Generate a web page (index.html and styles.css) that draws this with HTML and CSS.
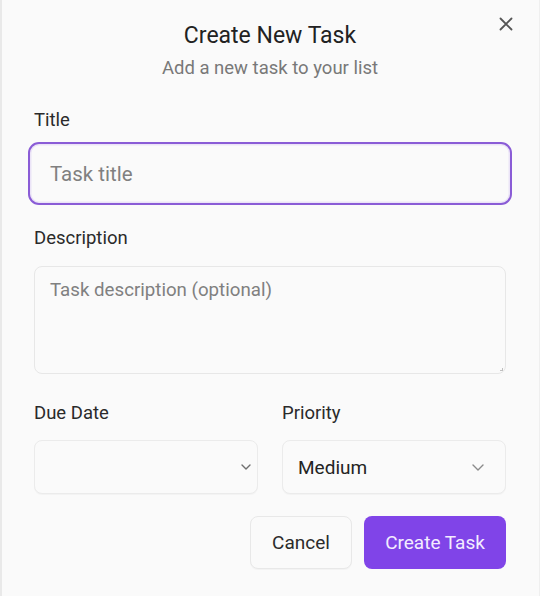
FILE: index.html
```html
<!DOCTYPE html>
<html lang="en">
<head>
<meta charset="utf-8">
<title>Create New Task</title>
<link rel="stylesheet" href="styles.css">
</head>
<body>
<div class="dialog">
  <button class="close" aria-label="Close">
    <svg width="14" height="14" viewBox="0 0 14 14"><path d="M1.5 1.5 L12.5 12.5 M12.5 1.5 L1.5 12.5" stroke="#555" stroke-width="1.8" stroke-linecap="round" fill="none"/></svg>
  </button>
  <header class="header">
    <h1 class="heading">Create New Task</h1>
    <p class="subheading">Add a new task to your list</p>
  </header>
  <div class="field field-title">
    <label class="label">Title</label>
    <div class="input input-focus"><span class="placeholder ph-lg">Task title</span></div>
  </div>
  <div class="field field-desc">
    <label class="label">Description</label>
    <div class="textarea-wrap">
      <textarea class="textarea" placeholder="Task description (optional)"></textarea>
      <span class="grip"></span>
    </div>
  </div>
  <div class="row">
    <div class="field col">
      <label class="label">Due Date</label>
      <div class="select select-date">
        <span></span>
        <svg class="chev" width="10" height="6" viewBox="0 0 10 6"><path d="M1 1 L5 5 L9 1" stroke="#6f6f6f" stroke-width="1.4" fill="none" stroke-linecap="round" stroke-linejoin="round"/></svg>
      </div>
    </div>
    <div class="field col">
      <label class="label">Priority</label>
      <div class="select select-prio">
        <span class="value">Medium</span>
        <svg class="chev" width="12" height="7" viewBox="0 0 12 7"><path d="M1 1 L6 6 L11 1" stroke="#8a8a8a" stroke-width="1.4" fill="none" stroke-linecap="round" stroke-linejoin="round"/></svg>
      </div>
    </div>
  </div>
  <div class="actions">
    <button class="btn btn-cancel">Cancel</button>
    <button class="btn btn-primary">Create Task</button>
  </div>
</div>
</body>
</html>
```

FILE: styles.css
```css
* { box-sizing: border-box; }
html, body { margin: 0; padding: 0; }
body {
  background: #fafafa;
  font-family: Roboto, "Noto Sans", Arial, sans-serif;
  color: #222;
  width: 540px;
  height: 596px;
  overflow: hidden;
  border-left: 2px solid #e9e9e9;
  border-right: 1px solid #efefef;
}
.dialog {
  position: relative;
  padding: 22px 33px 0 32px;
}
.close {
  position: absolute;
  top: 16px;
  right: 25px;
  width: 16px;
  height: 16px;
  padding: 0;
  border: none;
  background: transparent;
  display: flex;
  align-items: center;
  justify-content: center;
}
.header { text-align: center; }
.heading {
  margin: 0;
  font-size: 23px;
  line-height: 28px;
  font-weight: 400;
  color: #222;
}
.subheading {
  margin: 7px 0 0;
  font-size: 18.5px;
  line-height: 22px;
  color: #787878;
}
.field { display: flex; flex-direction: column; }
.label {
  font-size: 18.5px;
  line-height: 22px;
  color: #2a2a2a;
}
.field-title { margin-top: 30px; }
.field-title .label { margin-bottom: 11px; }
.input {
  height: 63px;
  display: flex;
  align-items: center;
  background: #fafafa;
}
.input-focus {
  margin: 0 -6px;
  border: 2px solid #8a5cd6;
  border-radius: 11px;
  padding-left: 20px;
  box-shadow: inset 0 0 0 1.5px #ebe4f7;
}
.placeholder { color: #808080; }
.ph-lg { font-size: 20.5px; }
.field-desc { margin-top: 22px; }
.field-desc .label { margin-bottom: 17px; }
.textarea-wrap { position: relative; display: flex; }
.textarea {
  flex: 1;
  height: 108px;
  border: 1px solid #e7e7e7;
  border-radius: 8px;
  background: #fafafa;
  padding: 12px 15px 11px;
  font-family: inherit;
  font-size: 18.7px;
  line-height: 22px;
  color: #222;
  resize: none;
  outline: none;
}
.textarea::placeholder { color: #808080; }
.grip {
  position: absolute;
  right: 3px;
  bottom: 3px;
  width: 3px;
  height: 3px;
  border-right: 1px solid #999;
  border-bottom: 1px solid #999;
  opacity: 0.6;
}
.row {
  display: grid;
  grid-template-columns: 1fr 1fr;
  gap: 24px;
  margin-top: 28px;
}
.col .label { margin-bottom: 16px; }
.select {
  height: 54px;
  border: 1px solid #ebebeb;
  border-radius: 8px;
  background: #fafafa;
  box-shadow: 0 1px 1px rgba(0,0,0,0.03);
  display: flex;
  align-items: center;
  justify-content: space-between;
  padding-left: 15px;
}
.select-date { padding-right: 6px; }
.select-prio { padding-right: 21px; }
.value { font-size: 19px; color: #242424; }
.actions {
  display: flex;
  justify-content: flex-end;
  gap: 12px;
  margin-top: 22px;
}
.btn {
  height: 53px;
  border-radius: 8px;
  font-family: inherit;
  font-size: 19px;
  padding: 0 21px;
  cursor: pointer;
}
.btn-cancel {
  width: 102px;
  border: 1px solid #e8e8e8;
  background: #fafafa;
  color: #2b2b2b;
  box-shadow: 0 1px 1px rgba(0,0,0,0.03);
}
.btn-primary {
  width: 142px;
  border: none;
  background: #8044e8;
  color: #f3ecff;
}
```
